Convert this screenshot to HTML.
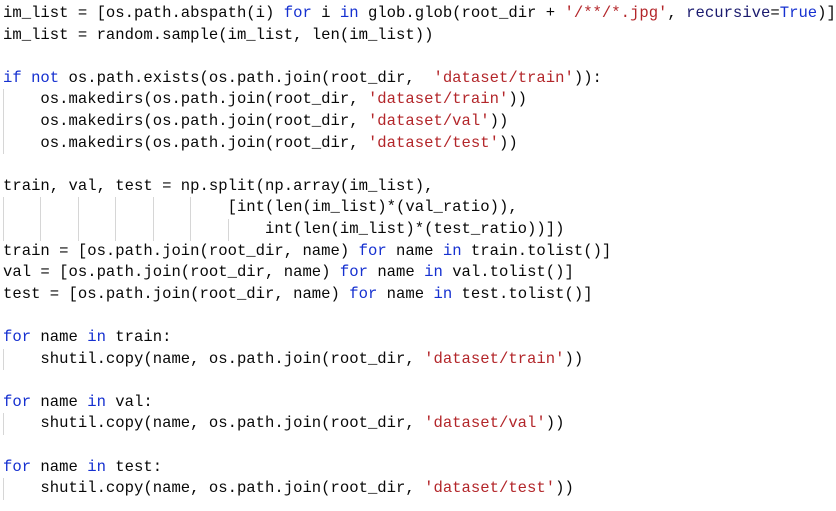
<!DOCTYPE html>
<html><head><meta charset="utf-8"><style>
html,body{margin:0;padding:0;background:#fff;width:836px;height:510px;overflow:hidden}
.w{position:absolute;left:0;top:1px;width:836px;height:510px}
.l{position:absolute;left:3px;height:21.6px;line-height:21.6px;white-space:pre;font-family:"Liberation Mono",monospace;font-size:15.6px;color:#080808}
.k{color:#1530d0}.s{color:#b3262a}.p{color:#1a1a6e}
.g{position:absolute;width:1px;background:#d6d6d6;height:21.6px}
</style></head><body><div class="w">
<div class="l" style="top:2px">im_list = [os.path.abspath(i) <span class="k">for</span> i <span class="k">in</span> glob.glob(root_dir + <span class="s">'/**/*.jpg'</span>, <span class="p">recursive</span>=<span class="k">True</span>)]</div>
<div class="l" style="top:23.6px">im_list = random.sample(im_list, len(im_list))</div>
<div class="l" style="top:66.8px"><span class="k">if not</span> os.path.exists(os.path.join(root_dir,  <span class="s">'dataset/train'</span>)):</div>
<div class="l" style="top:88.4px">    os.makedirs(os.path.join(root_dir, <span class="s">'dataset/train'</span>))</div>
<div class="l" style="top:110px">    os.makedirs(os.path.join(root_dir, <span class="s">'dataset/val'</span>))</div>
<div class="l" style="top:131.6px">    os.makedirs(os.path.join(root_dir, <span class="s">'dataset/test'</span>))</div>
<div class="l" style="top:174.8px">train, val, test = np.split(np.array(im_list),</div>
<div class="l" style="top:196.4px">                        [int(len(im_list)*(val_ratio)),</div>
<div class="l" style="top:218px">                            int(len(im_list)*(test_ratio))])</div>
<div class="l" style="top:239.6px">train = [os.path.join(root_dir, name) <span class="k">for</span> name <span class="k">in</span> train.tolist()]</div>
<div class="l" style="top:261.2px">val = [os.path.join(root_dir, name) <span class="k">for</span> name <span class="k">in</span> val.tolist()]</div>
<div class="l" style="top:282.8px">test = [os.path.join(root_dir, name) <span class="k">for</span> name <span class="k">in</span> test.tolist()]</div>
<div class="l" style="top:326px"><span class="k">for</span> name <span class="k">in</span> train:</div>
<div class="l" style="top:347.6px">    shutil.copy(name, os.path.join(root_dir, <span class="s">'dataset/train'</span>))</div>
<div class="l" style="top:390.8px"><span class="k">for</span> name <span class="k">in</span> val:</div>
<div class="l" style="top:412.4px">    shutil.copy(name, os.path.join(root_dir, <span class="s">'dataset/val'</span>))</div>
<div class="l" style="top:455.6px"><span class="k">for</span> name <span class="k">in</span> test:</div>
<div class="l" style="top:477.2px">    shutil.copy(name, os.path.join(root_dir, <span class="s">'dataset/test'</span>))</div>

<div class="g" style="left:3px;top:88.4px;height:64.8px"></div>
<div class="g" style="left:3px;top:196.4px;height:43.2px"></div>
<div class="g" style="left:40px;top:196.4px;height:43.2px"></div>
<div class="g" style="left:78px;top:196.4px;height:43.2px"></div>
<div class="g" style="left:115px;top:196.4px;height:43.2px"></div>
<div class="g" style="left:153px;top:196.4px;height:43.2px"></div>
<div class="g" style="left:190px;top:196.4px;height:43.2px"></div>
<div class="g" style="left:228px;top:218px;height:21.6px"></div>
<div class="g" style="left:3px;top:347.6px"></div>
<div class="g" style="left:3px;top:412.4px"></div>
<div class="g" style="left:3px;top:477.2px"></div>
</div></body></html>
